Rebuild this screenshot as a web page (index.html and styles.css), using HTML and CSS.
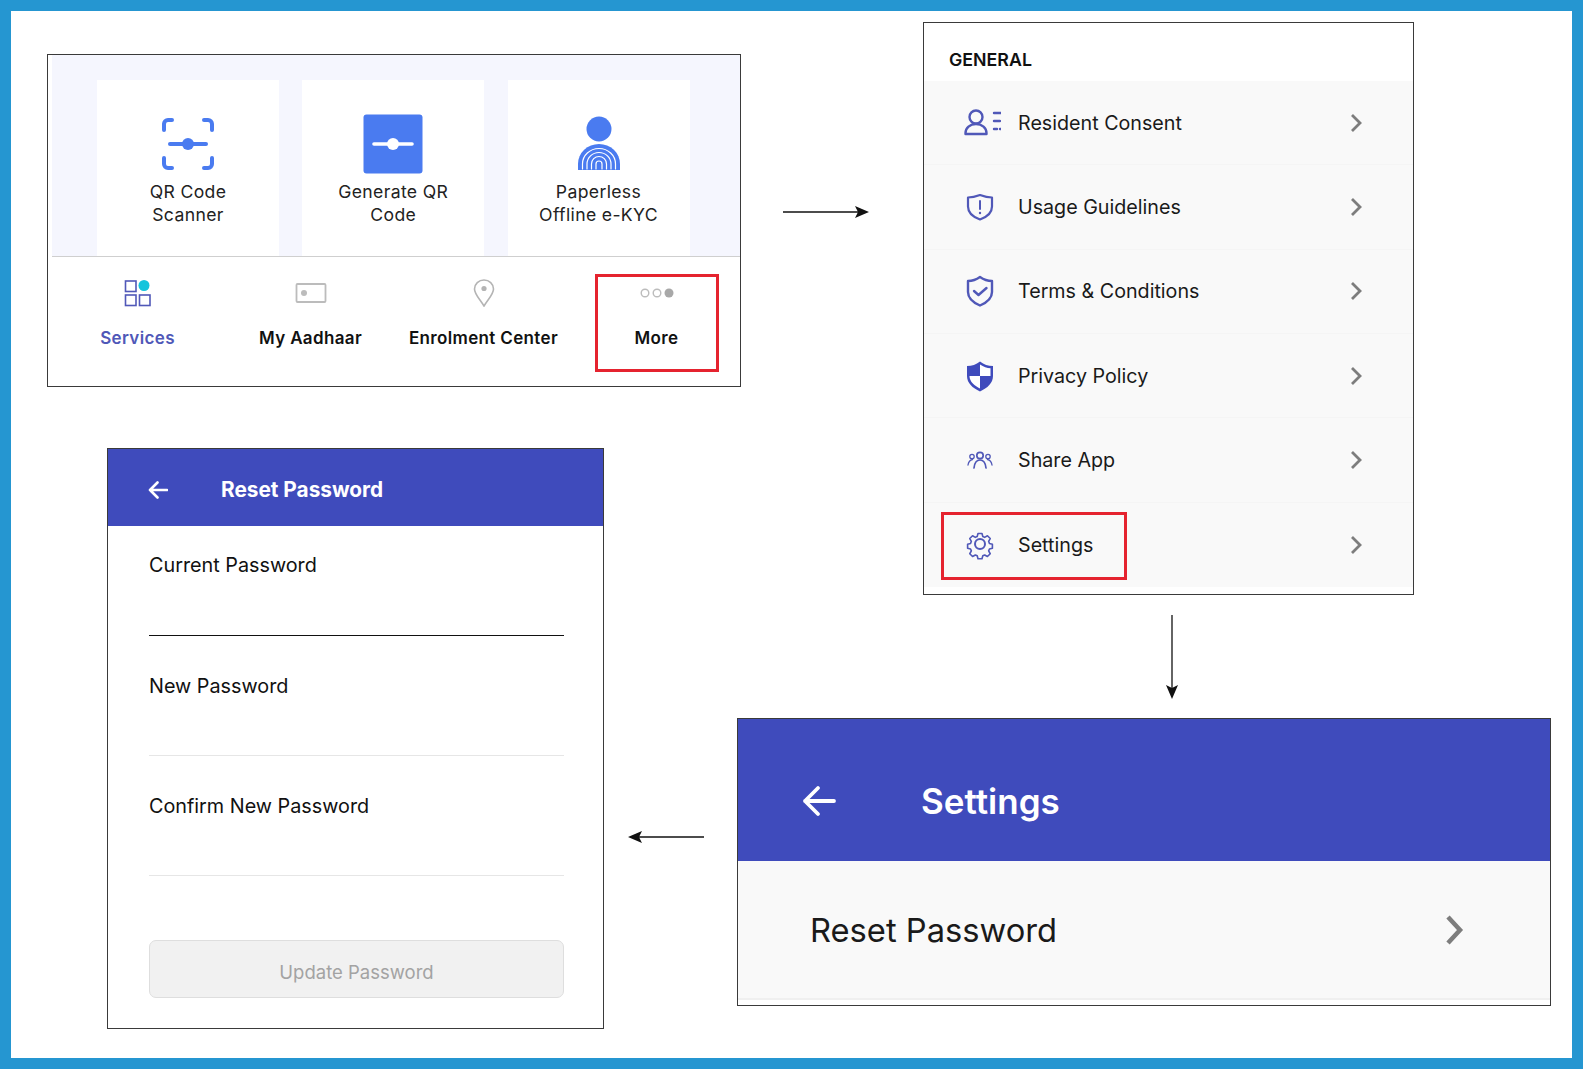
FILE: index.html
```html
<!DOCTYPE html>
<html lang="en">
<head>
<meta charset="UTF-8">
<title>Reset Password Steps</title>
<link rel="stylesheet" href="styles.css">
</head>
<body>
<div class="canvas">

  <!-- step 1: services screen -->
  <div class="panel services-panel">
    <div class="cards">
      <div class="card">
        <svg class="card-icon" width="60" height="60" viewBox="0 0 60 60" fill="none" stroke="#4a7bf0" stroke-width="4" stroke-linecap="round">
          <path d="M14 6H10a4 4 0 0 0-4 4v6M46 6h4a4 4 0 0 1 4 4v6M14 54H10a4 4 0 0 1-4-4v-6M46 54h4a4 4 0 0 0 4-4v-6"/>
          <path d="M12 30h36"/>
          <circle cx="30" cy="30" r="6" fill="#4a7bf0" stroke="none"/>
        </svg>
        <div class="card-label">QR Code<br>Scanner</div>
      </div>
      <div class="card">
        <svg class="card-icon" width="60" height="60" viewBox="0 0 60 60" fill="none">
          <rect x="0.5" y="0.5" width="59" height="59" rx="3" fill="#4a7bf0"/>
          <path d="M11 30h38" stroke="#fff" stroke-width="3.6" stroke-linecap="round"/>
          <circle cx="30" cy="30" r="6" fill="#fff"/>
        </svg>
        <div class="card-label">Generate QR<br>Code</div>
      </div>
      <div class="card">
        <svg class="card-icon" width="60" height="60" viewBox="0 0 60 60" fill="none">
          <circle cx="30" cy="15" r="12.5" fill="#4a7bf0"/>
          <path d="M9 56v-6a21 20 0 0 1 42 0v6z" fill="#4a7bf0"/>
          <g stroke="#fff" stroke-width="1.2" stroke-linecap="round">
            <path d="M13.500 55v-5a16.500 15.500 0 0 1 33 0v5"/>
            <path d="M18 55v-5a12 11.500 0 0 1 24 0v5"/>
            <path d="M22.500 55v-5a7.500 7.500 0 0 1 15 0v5"/>
            <path d="M27 55v-5a3 3 0 0 1 6 0v5"/>
          </g>
        </svg>
        <div class="card-label">Paperless<br>Offline e-KYC</div>
      </div>
    </div>
    <div class="tabs">
      <div class="tab tab-active">
        <svg width="28" height="28" viewBox="0 0 28 28" fill="none" stroke="#5058b8" stroke-width="1.6">
          <rect x="1.500" y="2" width="10.500" height="10.500"/>
          <rect x="1.500" y="16" width="10.500" height="10.500"/>
          <rect x="15.500" y="16" width="10.500" height="10.500"/>
          <circle cx="20" cy="6.500" r="5.500" fill="#14c4dc" stroke="none"/>
        </svg>
        <span>Services</span>
      </div>
      <div class="tab">
        <svg width="32" height="28" viewBox="0 0 32 28" fill="none" stroke="#bcbcbc" stroke-width="1.8">
          <rect x="1.500" y="5" width="29" height="18" rx="1"/>
          <circle cx="9" cy="14" r="3" fill="#bcbcbc" stroke="none"/>
        </svg>
        <span>My Aadhaar</span>
      </div>
      <div class="tab">
        <svg width="24" height="28" viewBox="0 0 24 28" fill="none" stroke="#b4b4b4" stroke-width="1.6">
          <path d="M12 27C7 19 2.500 15 2.500 10a9.500 9 0 0 1 19 0c0 5-4.500 9-9.500 17z"/>
          <circle cx="12" cy="9.500" r="2.600" fill="#b4b4b4" stroke="none"/>
        </svg>
        <span>Enrolment Center</span>
      </div>
      <div class="tab">
        <svg width="36" height="28" viewBox="0 0 36 28" fill="none" stroke="#bcbcbc" stroke-width="1.4">
          <circle cx="6" cy="14" r="3.800"/>
          <circle cx="18" cy="14" r="3.800"/>
          <circle cx="30" cy="14" r="4.500" fill="#a8a8a8" stroke="none"/>
        </svg>
        <span>More</span>
      </div>
    </div>
    <div class="highlight more-highlight"></div>
  </div>

  <svg class="arrow arrow-right" width="86" height="14" viewBox="0 0 86 14">
    <path d="M0 7h76" stroke="#111" stroke-width="1.300"/>
    <path d="M86 7L72 1l3 6-3 6z" fill="#111"/>
  </svg>

  <!-- step 2: more menu -->
  <div class="panel menu-panel">
    <div class="menu-title">GENERAL</div>
    <div class="menu-list">
      <div class="menu-row">
        <svg class="menu-icon" width="42" height="30" viewBox="-4 0 42 30" fill="none" stroke="#5058b8" stroke-width="2.400" stroke-linecap="round">
          <circle cx="13" cy="9" r="6.500"/>
          <path d="M2.500 26v-1c0-5 4.500-9 10.500-9s10.500 4 10.500 9v1z" stroke-linejoin="round"/>
          <path d="M31 5h7M31 13h6M31 21h3M37 21h1"/>
        </svg>
        <span class="menu-text">Resident Consent</span>
        <svg class="chevron" width="14" height="20" viewBox="0 0 14 20" fill="none" stroke="#7d7d7d" stroke-width="2.800"><path d="M3 2l8 8-8 8"/></svg>
      </div>
      <div class="menu-row">
        <svg class="menu-icon" width="42" height="30" viewBox="0 0 42 30" fill="none" stroke="#5058b8" stroke-width="2.200" stroke-linejoin="round" stroke-linecap="round">
          <path d="M9 5.500c4.500 0 8-1 12-2.500 4 1.500 7.500 2.500 12 2.500v9c0 6-5 10.500-12 13-7-2.500-12-7-12-13z"/>
          <path d="M21 9v8" stroke-width="2"/>
          <circle cx="21" cy="21" r="1.200" fill="#5058b8" stroke="none"/>
        </svg>
        <span class="menu-text">Usage Guidelines</span>
        <svg class="chevron" width="14" height="20" viewBox="0 0 14 20" fill="none" stroke="#7d7d7d" stroke-width="2.800"><path d="M3 2l8 8-8 8"/></svg>
      </div>
      <div class="menu-row">
        <svg class="menu-icon" width="42" height="32" viewBox="0 0 42 32" fill="none" stroke="#5058b8" stroke-width="2.400" stroke-linejoin="round" stroke-linecap="round">
          <path d="M9 6c4.500 0 8.500-1.500 12-4 3.500 2.500 7.500 4 12 4v11c0 6-5 10.500-12 13.500C14 27.500 9 23 9 17z"/>
          <path d="M15 16l4.500 4 8-7"/>
        </svg>
        <span class="menu-text">Terms &amp; Conditions</span>
        <svg class="chevron" width="14" height="20" viewBox="0 0 14 20" fill="none" stroke="#7d7d7d" stroke-width="2.800"><path d="M3 2l8 8-8 8"/></svg>
      </div>
      <div class="menu-row">
        <svg class="menu-icon" width="42" height="32" viewBox="0 0 42 32" fill="none">
          <path d="M8 6c5 0 9-1.500 13-4.500C25 4.500 29 6 34 6v10c0 7-5.500 12-13 15.500C13.500 28 8 23 8 16z" fill="#3f4bbc"/>
          <path d="M21 4.500c3.500 2.300 7 3.500 10.500 3.800V16H21zM21 16v12.500c-5-2.700-10.500-6.500-10.500-12.500z" fill="#fff"/>
        </svg>
        <span class="menu-text">Privacy Policy</span>
        <svg class="chevron" width="14" height="20" viewBox="0 0 14 20" fill="none" stroke="#7d7d7d" stroke-width="2.800"><path d="M3 2l8 8-8 8"/></svg>
      </div>
      <div class="menu-row">
        <svg class="menu-icon" width="42" height="24" viewBox="0 0 42 24" fill="none" stroke="#5058b8" stroke-width="1.700" stroke-linecap="round">
          <circle cx="21" cy="7.500" r="3.200"/>
          <path d="M15 20c.5-5 2.500-8 6-8s5.500 3 6 8"/>
          <circle cx="13" cy="8.500" r="2.200" stroke-width="1.300"/>
          <path d="M9 17c.5-3 2-5 4.500-5.500" stroke-width="1.300"/>
          <circle cx="29" cy="8.500" r="2.200" stroke-width="1.300"/>
          <path d="M33 17c-.5-3-2-5-4.500-5.500" stroke-width="1.300"/>
        </svg>
        <span class="menu-text">Share App</span>
        <svg class="chevron" width="14" height="20" viewBox="0 0 14 20" fill="none" stroke="#7d7d7d" stroke-width="2.800"><path d="M3 2l8 8-8 8"/></svg>
      </div>
      <div class="menu-row">
        <svg class="menu-icon" width="42" height="30" viewBox="0 1 42 30" fill="none" stroke="#5058b8" stroke-width="2" stroke-linejoin="round">
          <path d="M18.500 2.500h5l1 3.800 2.300 1 3.500-2 3.500 3.500-2 3.500 1 2.700 3.700 1v5l-3.700 1-1 2.300 2 3.500-3.500 3.500-3.500-2-2.300 1-1 3.700h-5l-1-3.700-2.300-1-3.500 2-3.500-3.500 2-3.500-1-2.300-3.700-1v-5l3.700-1 1-2.700-2-3.500 3.500-3.500 3.500 2 2.300-1z" transform="translate(4.200 2.500) scale(.8)"/>
          <circle cx="21" cy="15" r="5"/>
        </svg>
        <span class="menu-text">Settings</span>
        <svg class="chevron" width="14" height="20" viewBox="0 0 14 20" fill="none" stroke="#7d7d7d" stroke-width="2.800"><path d="M3 2l8 8-8 8"/></svg>
      </div>
    </div>
    <div class="highlight settings-highlight"></div>
  </div>

  <svg class="arrow arrow-down" width="14" height="84" viewBox="0 0 14 84">
    <path d="M7 0v74" stroke="#111" stroke-width="1.300"/>
    <path d="M7 84L1 70l6 3 6-3z" fill="#111"/>
  </svg>

  <!-- step 3: settings screen -->
  <div class="panel settings-panel">
    <div class="settings-header">
      <svg class="back-large" width="34" height="32" viewBox="0 0 34 32" fill="none" stroke="#fff" stroke-width="3.800" stroke-linecap="round" stroke-linejoin="round">
        <path d="M32 16H3M16 3L3 16l13 13"/>
      </svg>
      <span>Settings</span>
    </div>
    <div class="settings-row">
      <span>Reset Password</span>
      <svg width="20" height="30" viewBox="0 0 20 30" fill="none" stroke="#7d7d7d" stroke-width="4.500"><path d="M4 2l12 13L4 28"/></svg>
    </div>
  </div>

  <svg class="arrow arrow-left" width="76" height="14" viewBox="0 0 76 14">
    <path d="M10 7h66" stroke="#111" stroke-width="1.300"/>
    <path d="M0 7l14-6-3 6 3 6z" fill="#111"/>
  </svg>

  <!-- step 4: reset password form -->
  <div class="panel reset-panel">
    <div class="reset-header">
      <svg width="20" height="18" viewBox="0 0 20 18" fill="none" stroke="#fff" stroke-width="2.600" stroke-linecap="round" stroke-linejoin="round">
        <path d="M19 9H2M9.500 1.500L2 9l7.500 7.500"/>
      </svg>
      <span>Reset Password</span>
    </div>
    <div class="reset-body">
      <div class="field field-focus">Current Password</div>
      <div class="field">New Password</div>
      <div class="field">Confirm New Password</div>
      <div class="update-btn">Update Password</div>
    </div>
  </div>

</div>
</body>
</html>
```

FILE: styles.css
```css
* {
  box-sizing: border-box;
}
body {
  margin: 0;
  background: #fff;
  font-family: Inter, "Liberation Sans", sans-serif;
  color: #111;
}
.canvas {
  position: relative;
  width: 1583px;
  height: 1069px;
  background: #fff;
  border: 11px solid #2596d1;
  overflow: hidden;
}

/* panels and arrows are nodes of the diagram; canvas has an 11px border */
.panel {
  position: absolute;
  background: #fff;
  border: 1px solid #3a3a3a;
}
.services-panel {
  left: 36px;
  top: 43px;
  width: 694px;
  height: 333px;
}
.menu-panel {
  left: 912px;
  top: 11px;
  width: 491px;
  height: 573px;
}
.settings-panel {
  left: 726px;
  top: 707px;
  width: 814px;
  height: 288px;
}
.reset-panel {
  left: 96px;
  top: 437px;
  width: 497px;
  height: 581px;
}
.arrow {
  position: absolute;
  display: block;
}
.arrow-right {
  left: 772px;
  top: 194px;
}
.arrow-down {
  left: 1154px;
  top: 604px;
}
.arrow-left {
  left: 617px;
  top: 819px;
}
.highlight {
  position: absolute;
  border: 3px solid #e5232f;
}
.more-highlight {
  left: 547px;
  top: 219px;
  width: 124px;
  height: 98px;
}
.settings-highlight {
  left: 17px;
  top: 489px;
  width: 186px;
  height: 68px;
}

/* services */
.cards {
  display: flex;
  gap: 23.250px;
  height: 202px;
  padding: 25px 0 0 45px;
  margin-left: 4px;
  background: #f5f6fe;
  border-bottom: 1px solid #cfcfcf;
}
.card {
  width: 182px;
  background: #fff;
  text-align: center;
  padding-top: 34px;
}
.card-icon {
  display: block;
  margin: 0 auto 7px;
}
.card-label {
  font-size: 17.600px;
  line-height: 22.500px;
  letter-spacing: .35px;
  color: #222;
}
.tabs {
  display: grid;
  grid-template-columns: repeat(4, 173px);
  padding: 22px 0 0 3px;
}
.tab {
  display: flex;
  flex-direction: column;
  align-items: center;
  font-size: 17px;
  font-weight: 600;
  letter-spacing: .35px;
  white-space: nowrap;
}
.tab svg {
  margin-bottom: 21px;
}
.tab-active {
  color: #4f58b8;
}

/* menu */
.menu-title {
  height: 58px;
  padding: 27px 0 0 25px;
  font-size: 17.800px;
  font-weight: 600;
  line-height: 20px;
}
.menu-list {
  display: flex;
  flex-direction: column;
  height: 506px;
  background: #f9f9f9;
}
.menu-row {
  display: flex;
  align-items: center;
  height: 84.600px;
  border-bottom: 1px solid #f5f5f5;
  padding: 0 50px 0 35px;
}
.menu-row:last-child {
  border-bottom: none;
}
.menu-icon {
  flex: none;
  margin-right: 17px;
}
.menu-text {
  flex: 1;
  font-size: 19.700px;
  color: #1a1a1a;
}

/* settings */
.settings-header {
  display: flex;
  align-items: center;
  height: 142px;
  padding: 22px 0 0 64px;
  background: #3f4bbc;
  color: #fff;
  font-size: 35px;
  font-weight: 600;
}
.back-large {
  margin-right: 85px;
}
.settings-row {
  display: flex;
  align-items: center;
  justify-content: space-between;
  height: 139px;
  padding: 0 86px 0 72px;
  background: #f9f9f9;
  border-bottom: 2px solid #f0f0f0;
  font-size: 32.700px;
  color: #1a1a1a;
}

/* reset password */
.reset-header {
  display: flex;
  align-items: center;
  height: 77px;
  padding: 4px 0 0 40px;
  background: #3f4bbc;
  color: #fff;
  font-size: 20.800px;
  font-weight: 700;
}
.reset-header svg {
  margin-right: 53px;
}
.reset-body {
  padding: 0 39px 0 41px;
}
.field {
  height: 120px;
  padding-top: 38px;
  line-height: 25px;
  font-size: 19.800px;
  color: #111;
  border-bottom: 1px solid #e6e6e6;
}
.field:first-child {
  height: 110px;
  padding-top: 27px;
}
.field-focus {
  border-bottom-color: #111;
}
.update-btn {
  margin-top: 64px;
  height: 58px;
  line-height: 63px;
  text-align: center;
  font-size: 18.500px;
  color: #a3a3a3;
  background: #f1f1f1;
  border: 1px solid #dedede;
  border-radius: 7px;
}
```
